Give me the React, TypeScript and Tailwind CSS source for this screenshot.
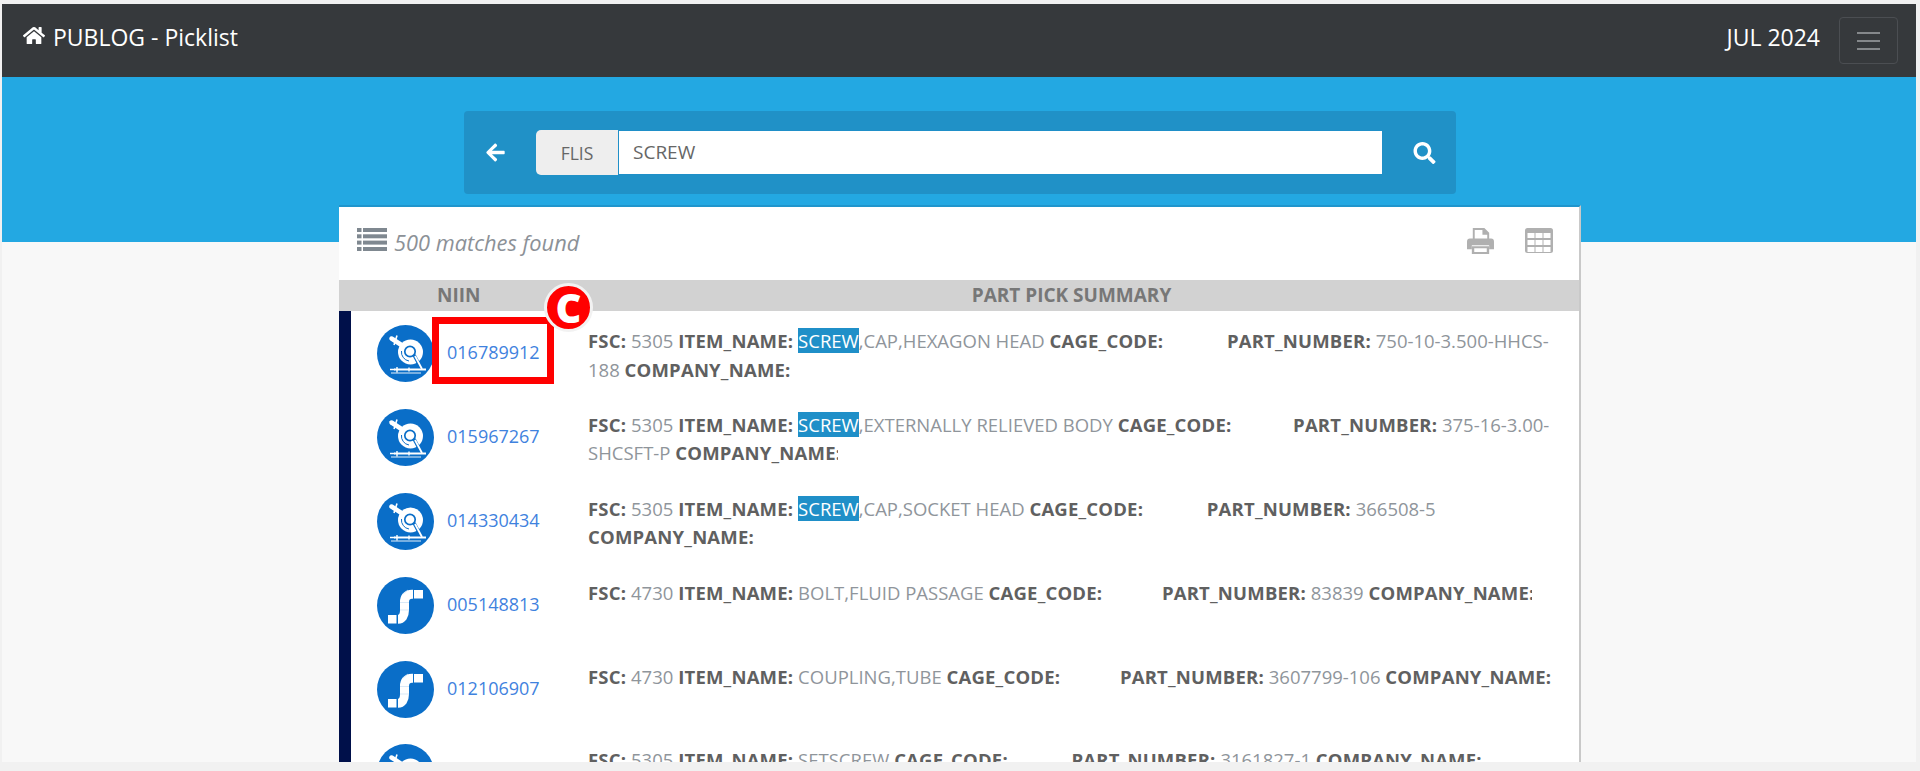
import { FaArrowLeft, FaHome, FaSearch } from "react-icons/fa";

type Part = {
  niin: string;
  icon: "saw" | "pipe";
  fsc: string;
  item: string;
  highlight?: boolean;
  cageGap: string;
  part: string;
  companyClip?: boolean;
};

const PARTS: Part[] = [
  { niin: "016789912", icon: "saw", fsc: "5305", item: ",CAP,HEXAGON HEAD", highlight: true, cageGap: "w-[54px]", part: "750-10-3.500-HHCS-188" },
  { niin: "015967267", icon: "saw", fsc: "5305", item: ",EXTERNALLY RELIEVED BODY", highlight: true, cageGap: "w-[52px]", part: "375-16-3.00-SHCSFT-P", companyClip: true },
  { niin: "014330434", icon: "saw", fsc: "5305", item: ",CAP,SOCKET HEAD", highlight: true, cageGap: "w-[54px]", part: "366508-5" },
  { niin: "005148813", icon: "pipe", fsc: "4730", item: "BOLT,FLUID PASSAGE", cageGap: "-ml-[5px] w-[55px]", part: "83839", companyClip: true },
  { niin: "012106907", icon: "pipe", fsc: "4730", item: "COUPLING,TUBE", cageGap: "w-[50px]", part: "3607799-106" },
  { niin: "", icon: "saw", fsc: "5305", item: "SETSCREW", cageGap: "w-[54px]", part: "3161827-1" },
];

function SawIcon() {
  return (
    <svg viewBox="0 0 57 57" className="h-[57px] w-[57px] shrink-0">
      <circle cx="28.5" cy="28.5" r="28.5" fill="#0a6ec8" />
      <path d="M14.5 13.5 L26 21" stroke="#fff" strokeWidth="4.5" strokeLinecap="round" />
      <path d="M20 10.5 L17 20" stroke="#fff" strokeWidth="1.6" />
      <circle cx="33.5" cy="27" r="12.5" fill="#fff" />
      <circle cx="33" cy="26.5" r="5.2" fill="#fff" stroke="#0a6ec8" strokeWidth="1.7" />
      <path d="M24.5 26 A9 9 0 0 0 32 36" fill="none" stroke="#0a6ec8" strokeWidth="1" />
      <path d="M37 30 L44 43" stroke="#0a6ec8" strokeWidth="3.4" />
      <path d="M38 31 L45 44" stroke="#fff" strokeWidth="1.8" />
      <path d="M17 44.5 H49" stroke="#fff" strokeWidth="2" />
      <path d="M20 42 V47.5 M32 42.5 V46.5 M13 44.5 H18" stroke="#fff" strokeWidth="1.4" />
      <path d="M14 48 H44" stroke="#fff" strokeWidth="0.9" />
    </svg>
  );
}

function PipeIcon() {
  return (
    <svg viewBox="0 0 57 57" className="h-[57px] w-[57px] shrink-0">
      <circle cx="28.5" cy="28.5" r="28.5" fill="#0a6ec8" />
      <rect x="11" y="38" width="8.5" height="8.5" fill="#fff" />
      <rect x="37" y="13" width="9" height="8.5" fill="#fff" />
      <path d="M36 17.2 H35 C29.5 17.2 27.5 20.5 27.5 25 V33 C27.5 39 25 42.3 21 42.3" fill="none" stroke="#fff" strokeWidth="9" />
      <path d="M23 25.5 H32 M23 33 H32 M26 17 L31 13" stroke="#cfe3f5" strokeWidth="0.8" />
    </svg>
  );
}

function ListIcon() {
  return (
    <svg viewBox="0 0 30 23" className="h-[23px] w-[30px]" fill="#7f8890">
      <rect x="0" y="0" width="4.5" height="4" />
      <rect x="6" y="0" width="24" height="4" />
      <rect x="0" y="6.3" width="4.5" height="4" />
      <rect x="6" y="6.3" width="24" height="4" />
      <rect x="0" y="12.6" width="4.5" height="4" />
      <rect x="6" y="12.6" width="24" height="4" />
      <rect x="0" y="19" width="4.5" height="4" />
      <rect x="6" y="19" width="24" height="4" />
    </svg>
  );
}

function PrintIcon() {
  return (
    <svg viewBox="0 0 28 27" className="h-[26px] w-[27px]" fill="#b0b0b0">
      <path d="M6 0 H18 L23 5 V12 H21 V7 H16 V2 H8 V12 H6 Z" />
      <path d="M3 11 H25 A3 3 0 0 1 28 14 V22 H23 V18 H5 V22 H0 V14 A3 3 0 0 1 3 11 Z" />
      <path fillRule="evenodd" d="M5 19 H23 V27 H5 Z M7.5 21 V25 H20.5 V21 Z" />
    </svg>
  );
}

function GridIcon() {
  return (
    <svg viewBox="0 0 28 25" className="h-[25px] w-[28px]">
      <rect width="28" height="25" rx="2.5" fill="#b0b0b0" />
      {[5, 12, 19].map((y) =>
        [2.5, 10.5, 18.5].map((x) => <rect key={`${x}-${y}`} x={x} y={y} width="7" height="5" fill="#fff" />),
      )}
    </svg>
  );
}

function Row({ row, marked }: { row: Part; marked: boolean }) {
  return (
    <div className="flex h-[83.9px] items-start pl-[26px] pt-[14px]">
      {row.icon === "saw" ? <SawIcon /> : <PipeIcon />}
      <div className="relative ml-[13px] w-[141px] shrink-0 text-[18px] leading-[54px] text-[#3f82de]">
        {row.niin}
        {marked && (
          <>
            <div className="absolute -left-[15px] -top-[8px] h-[67px] w-[122px] border-[7px] border-[#ff0000]" />
            <div className="absolute left-[97px] -top-[42px] flex h-[49px] w-[49px] items-center justify-center rounded-full border-[3px] border-[#f2f2f2] bg-[#ff0000] text-[40px] leading-none font-extrabold text-white">
              C
            </div>
          </>
        )}
      </div>
      <p className="w-[980px] shrink-0 pt-[2px] text-[18.5px] leading-[28.5px] text-[#8f959b]">
        <b className="tracking-[0.2px] text-[#606060]">FSC:</b> {row.fsc}{" "}
        <b className="tracking-[0.2px] text-[#606060]">ITEM_NAME:</b>{" "}
        {row.highlight && <span className="bg-[#1f8fc8] text-white">SCREW</span>}
        {row.item} <b className="tracking-[0.2px] text-[#606060]">CAGE_CODE:</b>{" "}
        <span className={`inline-block h-[24px] bg-white align-middle ${row.cageGap}`} />{" "}
        <b className="tracking-[0.2px] text-[#606060]">PART_NUMBER:</b> {row.part}{" "}
        <b className="tracking-[0.2px] text-[#606060]">COMPANY_NAME:</b>
        {row.companyClip && <span className="-ml-[3px] inline-block h-[24px] w-[8px] bg-white align-middle" />}
      </p>
    </div>
  );
}

export default function App() {
  return (
    <div className="h-[771px] overflow-hidden bg-[#f1f1f1] font-['Open_Sans',sans-serif]">
      <div className="ml-[2px] mr-[4px] mt-[4px] flex h-[758px] flex-col overflow-hidden bg-[#f8f8f8]">
        <nav className="flex h-[73px] shrink-0 items-center justify-between bg-[#36393c] pl-[21px] pr-[18px] text-white">
          <div className="flex items-center pb-[6px] text-[23px]">
            <FaHome className="mb-[5px] mr-[8px] h-[21px] w-[22px]" />
            PUBLOG - Picklist
          </div>
          <div className="flex items-center">
            <span className="pb-[6px] text-[23px]">JUL 2024</span>
            <button type="button" className="ml-[19px] flex h-[47px] w-[59px] flex-col items-center justify-center gap-[6px] rounded-[4px] border border-[#4b4e52]">
              <span className="h-[2px] w-[23px] bg-[#85888b]" />
              <span className="h-[2px] w-[23px] bg-[#85888b]" />
              <span className="h-[2px] w-[23px] bg-[#85888b]" />
            </button>
          </div>
        </nav>

        <div className="flex h-[165px] shrink-0 justify-center bg-[#23a8e2] pl-[2px] pt-[34px]">
          <div className="flex h-[83px] w-[992px] items-center rounded-[4px] bg-[#2091c7] pl-[21px] text-white">
            <FaArrowLeft className="h-[21px] w-[21px]" />
            <div className="ml-[30px] flex h-[45px] w-[82px] items-center justify-center rounded-l-[5px] bg-[#eeeeee] pt-[2px] text-[17.5px] text-[#666]">
              FLIS
            </div>
            <div className="flex h-[45px] w-[765px] items-center border border-[#1f8fc8] bg-white pl-[14px] text-[19px] text-[#666]">
              SCREW
            </div>
            <FaSearch className="ml-[30px] h-[22px] w-[23px]" />
          </div>
        </div>

        <div className="relative -mt-[37px] ml-[337px] w-[1242px] shrink-0 border-r-2 border-t-2 border-[#c9c9c9] border-t-[#1f95cc] bg-white">
          <div className="flex h-[73px] items-start justify-between pl-[18px] pr-[26px] pt-[21px]">
            <div className="flex items-start">
              <ListIcon />
              <span className="ml-[7px] mt-[-1px] text-[21.8px] italic text-[#8c9197]">500 matches found</span>
            </div>
            <div className="flex items-start gap-[31px]">
              <PrintIcon />
              <GridIcon />
            </div>
          </div>
          <div className="flex h-[31px] items-center bg-[#d2d2d2] text-[19px] font-bold text-[#777]">
            <div className="w-[249px] pl-[98px]">NIIN</div>
            <div className="w-[967px] text-center">PART PICK SUMMARY</div>
          </div>
          <div className="border-l-[12px] border-[#00104a]">
            {PARTS.map((row, i) => (
              <Row key={i} row={row} marked={i === 0} />
            ))}
          </div>
        </div>
      </div>
    </div>
  );
}
